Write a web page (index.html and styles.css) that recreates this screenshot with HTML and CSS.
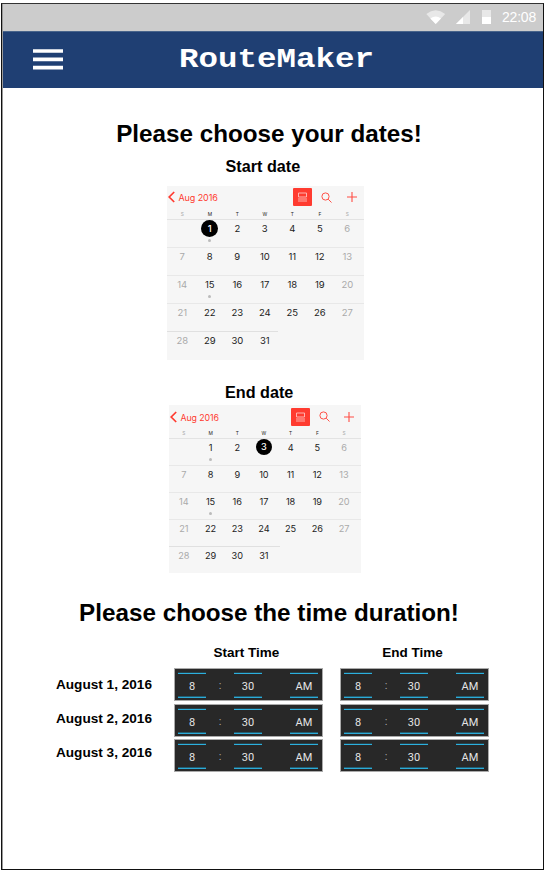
FILE: index.html
```html
<!DOCTYPE html>
<html lang="en">
<head>
<meta charset="utf-8">
<title>RouteMaker</title>
<link rel="stylesheet" href="styles.css">
</head>
<body>
<div class="phone">
  <div class="status">
    <svg class="wifi" width="20" height="14" viewBox="0 0 20 14"><path fill="#e8e8e8" d="M.3 4Q9.7-3.300 19.200 4L9.700 14z"/><path fill="#fff" d="M4.300 8.400Q9.700 4.800 15 8.400L9.700 14z"/></svg>
    <svg class="signal" width="14" height="14" viewBox="0 0 14 14"><path fill="#e8e8e8" d="M14 0v14H0z"/><path fill="#fff" d="M7 7v7H0z"/></svg>
    <svg class="battery" width="9" height="14" viewBox="0 0 9 14"><path fill="#e8e8e8" d="M0 0h9v7H0z"/><path fill="#fff" d="M0 7h9v7H0z"/></svg>
    <span class="clock">22:08</span>
  </div>
  <header class="header">
    <svg class="menu" width="30" height="21" viewBox="0 0 30 21"><path fill="#fff" d="M0 .2h30v3.600H0zM0 8.600h30v3.600H0zM0 16.800h30v3.600H0z"/></svg>
    <h1 class="brand">RouteMaker</h1>
  </header>
  <main>
    <h2 class="heading">Please choose your dates!</h2>
    <h3 class="label start-label">Start date</h3>
    <section class="cal cal-start" data-day="1"></section>
    <h3 class="label end-label">End date</h3>
    <section class="cal cal-end" data-day="3"></section>
    <h2 class="heading duration">Please choose the time duration!</h2>
    <div class="times">
      <div class="dates">
        <span>August 1, 2016</span><span>August 2, 2016</span><span>August 3, 2016</span>
      </div>
      <div class="column"><h4>Start Time</h4></div>
      <div class="column"><h4>End Time</h4></div>
    </div>
  </main>
</div>
<script src="script.js"></script>
</body>
</html>
```
FILE: styles.css
```css
* { box-sizing: border-box; }
body { margin: 0; background: #fff; font-family: "Liberation Sans", Arial, sans-serif; color: #000; }
h1, h2, h3, h4 { margin: 0; }
svg { display: block; flex: none; }
.phone { width: 543px; height: 867px; margin: 3px 0 0 1px; border: 1px solid #111; border-top-color: #333; padding-left: 1px; box-shadow: inset 1px 0 #999; }
.status { height: 27px; background: #ccc; display: flex; align-items: center; justify-content: flex-end; padding-right: 7px; padding-bottom: 1px; color: #fff; }
.wifi { margin-right: 10px; }
.signal { margin-right: 12px; }
.battery { margin-right: 11px; }
.clock { font-size: 14px; line-height: 14px; width: 34px; letter-spacing: -.2px; }
.header { height: 57px; background: #1f3f73; display: flex; align-items: center; border-top: 1px solid #48648b; padding-left: 30px; }
.menu { margin-top: -1px; }
.brand { margin-left: 116px; font: bold 32.500px/40px "Liberation Mono", monospace; color: #fff; transform: scaleY(.87); }
.heading { font-size: 24.240px; line-height: 30px; text-align: center; padding-top: 31px; padding-right: 8px; white-space: nowrap; }
.label { font-size: 16.200px; line-height: 20px; }
.start-label { margin: 7px 0 0 222.500px; }
.end-label { margin: 21.500px 0 0 222px; }
.cal { --col: 27.5px; --row: 28.1px; background: #f6f6f6; font-family: Inter, sans-serif; }
.cal-start { width: 197px; height: 174.500px; margin: 9.500px 0 0 164px; }
.cal-end { --col: 26.7px; --row: 27.1px; width: 192px; height: 167.500px; margin: 3.500px 0 0 166px; }
.bar { height: 23px; display: flex; align-items: center; color: #ff3b30; font-size: 9px; letter-spacing: -.1px; }
.cal-end .bar { font-size: 8.800px; }
.back { margin: 0 3.500px 0 1px; }
.month { flex: 1; white-space: nowrap; padding-top: 1px; }
.list { margin-right: 9px; }
.search { margin-right: 15px; }
.plus { margin-right: 7.500px; }
.cal-end .search { margin-right: 14px; }
.week { display: grid; grid-template-columns: repeat(7, var(--col)); padding-left: 1.500px; height: var(--row); font-size: 9.500px; letter-spacing: -.1px; text-align: center; border-top: 1px solid #e8e8e8; color: #222; }
.cal-end .week { font-size: 9.200px; }
.names, .cal-end .names { height: 10px; border: 0; font-size: 4.800px; line-height: 11px; }
.names + .week { border-top-color: #e3e3e3; }
.last { width: 111px; border-top-color: #e0e0e0; }
.day { position: relative; height: 17px; line-height: 17px; margin-top: .5px; }
.cal-end .day { margin-top: 0; }
.week .dim { color: #aaa; }
.picked b { display: block; width: 17px; height: 17px; margin: 0 auto; border-radius: 50%; background: #000; color: #fff; font-weight: 500; }
.cal-end .picked b { width: 16px; height: 16px; line-height: 16px; }
.event::after { content: ""; position: absolute; left: 50%; top: 19px; width: 3px; height: 3px; margin-left: -1.500px; border-radius: 50%; background: #bbb; }
.duration { padding-top: 25.500px; }
.times { display: flex; padding-left: 53px; margin-top: 17px; }
.dates { width: 118px; padding-top: 32px; font-size: 13.600px; font-weight: bold; display: flex; flex-direction: column; gap: 17.800px; line-height: 16px; white-space: nowrap; }
.column { width: 149px; margin-right: 17px; }
.column h4 { font-size: 13.500px; line-height: 16px; margin: 0 0 7px; text-align: center; padding-right: 4px; }
.picker { height: 33px; margin-bottom: 2.700px; background: #282828; border: 1px solid #aaa; display: flex; padding: 4px 3px 3px; font: 11px/22px Roboto, sans-serif; color: #e4e4e4; text-align: center; }
.slot { width: 28px; height: 25px; border-top: 1px solid #2cb0de; border-bottom: 1px solid #2cabd8; box-shadow: inset 0 -1px #235d70, 0 -1px #25424c; line-height: 26px; }
.colon { width: 28px; line-height: 26px; color: #aaa; }
```
FILE: script.js
```js
const rows = [['', 1, 2, 3, 4, 5, 6]];
for (let d = 7; d <= 28; d += 7) {
  rows.push(Array.from({ length: 7 }, (_, i) => d + i).filter(n => n <= 31));
}
document.querySelectorAll('.cal').forEach(cal => {
  const picked = Number(cal.dataset.day);
  const names = 'SMTWTFS'.split('').map((n, i) => `<span class="${i % 6 ? '' : 'dim'}">${n}</span>`).join('');
  const weeks = rows.map((row, r) => `<div class="week${r === 4 ? ' last' : ''}">` + row.map((n, i) => {
    const cls = ['day'];
    if (i % 6 === 0) cls.push('dim');
    if (n === picked) cls.push('picked');
    if (n === 1 || n === 15) cls.push('event');
    return `<span class="${cls.join(' ')}">${n === picked ? `<b>${n}</b>` : n}</span>`;
  }).join('') + '</div>').join('');
  cal.innerHTML = `<div class="bar">
    <svg class="back" width="7" height="12" viewBox="0 0 7 12" fill="none" stroke="#ff3b30" stroke-width="1.7"><path d="M6.200 1L1.200 6l5 5"/></svg>
    <span class="month">Aug 2016</span>
    <svg class="list" width="19" height="18" viewBox="0 0 19 18"><rect width="19" height="18" rx="1" fill="#ff3b30"/><path d="M5.500 5h8v4h-8zM5 11h9M5 13h9" fill="none" stroke="#ffc1bd" stroke-width=".9"/></svg>
    <svg class="search" width="11" height="11" viewBox="0 0 11 11" fill="none" stroke="#ff5148"><circle cx="4.500" cy="4.500" r="3.600"/><path d="M7.200 7.200l3.300 3.300"/></svg>
    <svg class="plus" width="10" height="10" viewBox="0 0 10 10" stroke="#ff4d44" stroke-width="1.1"><path d="M5 0v10M0 5h10"/></svg>
  </div><div class="week names">${names}</div>${weeks}`;
});
document.querySelectorAll('.column').forEach(col => {
  for (let i = 0; i < 3; i++) {
    col.insertAdjacentHTML('beforeend', '<div class="picker"><span class="slot">8</span><span class="colon">:</span><span class="slot">30</span><span class="colon"></span><span class="slot">AM</span></div>');
  }
});
```
